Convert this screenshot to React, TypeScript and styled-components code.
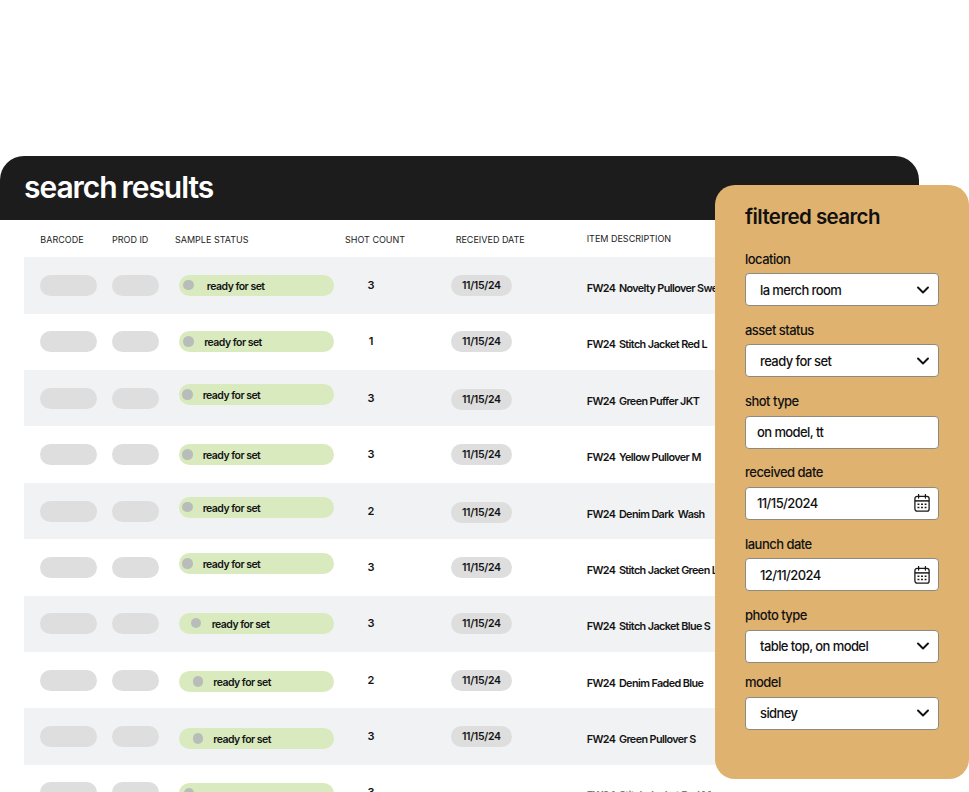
import styled, { createGlobalStyle } from 'styled-components';
import { ChevronDown } from 'lucide-react';

interface Sample {
	count: number;
	item: string;
	statusTop: number;
	dotLeft: number;
	textGap: number;
	dateTop: number;
	cutOff?: boolean;
}

const samples: Sample[] = [
	{ count: 3, item: 'Novelty Pullover Sweater', statusTop: 17.7, dotLeft: 4.7, textGap: 13, dateTop: 17.7 },
	{ count: 1, item: 'Stitch Jacket Red L', statusTop: 17.6, dotLeft: 4.7, textGap: 10.3, dateTop: 17.6 },
	{ count: 3, item: 'Green Puffer JKT', statusTop: 14, dotLeft: 3.7, textGap: 9.8, dateTop: 19 },
	{ count: 3, item: 'Yellow Pullover M', statusTop: 17.8, dotLeft: 3.7, textGap: 9.8, dateTop: 17.8 },
	{ count: 2, item: 'Denim Dark  Wash', statusTop: 14, dotLeft: 3.7, textGap: 9.8, dateTop: 19 },
	{ count: 3, item: 'Stitch Jacket Green L', statusTop: 14, dotLeft: 3.7, textGap: 9.8, dateTop: 18 },
	{ count: 3, item: 'Stitch Jacket Blue S', statusTop: 17, dotLeft: 12, textGap: 10.5, dateTop: 17.6 },
	{ count: 2, item: 'Denim Faded Blue', statusTop: 19, dotLeft: 14, textGap: 10.1, dateTop: 17.9 },
	{ count: 3, item: 'Green Pullover S', statusTop: 19.8, dotLeft: 14, textGap: 10.1, dateTop: 17.6 },
	{ count: 3, item: 'Stitch Jacket Red M', statusTop: 17.8, dotLeft: 5.3, textGap: 10, dateTop: 17.8, cutOff: true },
];

const CalendarIcon = () => (
	<CalendarSvg width="16" height="18" viewBox="0 0 16 18" fill="none" stroke="#1a1a1a" strokeWidth="1.3">
		<rect x="0.9" y="2.4" width="14.2" height="14.7" rx="2.2" />
		<path d="M0.9 6.9h14.2" strokeWidth="1.5" />
		<path d="M4.6 0.6v3.4M11.4 0.6v3.4" strokeLinecap="round" />
		<path d="M3.5 10.2h1.9M7.05 10.2h1.9M10.6 10.2h1.9M3.5 13.4h1.9M7.05 13.4h1.9M10.6 13.4h1.9" strokeWidth="1.5" />
	</CalendarSvg>
);

const Chevron = () => <ChevronDown size={20} strokeWidth={2.3} color="#111" />;

export default function App() {
	return (
		<>
			<GlobalStyle />
			<Stage>
				<Results>
					<TitleBar>
						<Title>search results</Title>
					</TitleBar>
					<ColumnRow>
						<ColumnName>BARCODE</ColumnName>
						<ColumnName>PROD ID</ColumnName>
						<ColumnName $shift={-3.7}>SAMPLE STATUS</ColumnName>
						<ColumnName>SHOT COUNT</ColumnName>
						<ColumnName $shift={4.7}>RECEIVED DATE</ColumnName>
						<ColumnName $raise>ITEM DESCRIPTION</ColumnName>
					</ColumnRow>
					{samples.map((sample, index) => (
						<Row key={index} $shaded={index % 2 === 0}>
							<Placeholder $width={56.4} />
							<Placeholder $width={46.7} />
							<StatusPill $top={sample.statusTop}>
								<StatusDot $left={sample.dotLeft} />
								{!sample.cutOff && <StatusText $gap={sample.textGap}>ready for set</StatusText>}
							</StatusPill>
							<Count>{sample.count}</Count>
							{sample.cutOff ? <span /> : <DatePill $top={sample.dateTop}>11/15/24</DatePill>}
							<Description $faded={sample.cutOff}>
								<Season>FW24</Season>
								{sample.item}
							</Description>
						</Row>
					))}
				</Results>

				<FilterPanel>
					<PanelTitle>filtered search</PanelTitle>
					<Field>
						<FieldLabel>location</FieldLabel>
						<FieldBox>
							la merch room
							<Chevron />
						</FieldBox>
					</Field>
					<Field>
						<FieldLabel>asset status</FieldLabel>
						<FieldBox>
							ready for set
							<Chevron />
						</FieldBox>
					</Field>
					<Field>
						<FieldLabel>shot type</FieldLabel>
						<FieldBox $inset={11}>on model, tt</FieldBox>
					</Field>
					<Field>
						<FieldLabel>received date</FieldLabel>
						<FieldBox $inset={11}>
							11/15/2024
							<CalendarIcon />
						</FieldBox>
					</Field>
					<Field>
						<FieldLabel>launch date</FieldLabel>
						<FieldBox>
							12/11/2024
							<CalendarIcon />
						</FieldBox>
					</Field>
					<Field>
						<FieldLabel>photo type</FieldLabel>
						<FieldBox>
							table top, on model
							<Chevron />
						</FieldBox>
					</Field>
					<Field $tight>
						<FieldLabel>model</FieldLabel>
						<FieldBox>
							sidney
							<Chevron />
						</FieldBox>
					</Field>
				</FilterPanel>
			</Stage>
		</>
	);
}

const GlobalStyle = createGlobalStyle`
	html, body {
		margin: 0;
		background: #fff;
	}
	* {
		box-sizing: border-box;
	}
`;

const Stage = styled.main`
	position: relative;
	width: 969px;
	height: 792px;
	padding-top: 156px;
	overflow: hidden;
	background: #fff;
	font-family: Inter, 'Liberation Sans', sans-serif;
	color: #141414;
`;

const Results = styled.section`
	width: 919px;
`;

const TitleBar = styled.header`
	display: flex;
	align-items: center;
	height: 63.6px;
	padding: 0 0 2px 24px;
	background: #1c1c1c;
	border-radius: 24px 24px 0 0;
`;

const Title = styled.h1`
	margin: 0;
	font-size: 30px;
	font-weight: 600;
	letter-spacing: -0.035em;
	word-spacing: -1.5px;
	color: #fff;
`;

const tableColumns = '71.7px 66.7px 166.3px 106px 135.7px 1fr';

const ColumnRow = styled.div`
	display: grid;
	grid-template-columns: ${tableColumns};
	align-items: center;
	height: 37.7px;
	padding: 4px 0 0 40.3px;
`;

const ColumnName = styled.span<{ $shift?: number; $raise?: boolean }>`
	margin-left: ${({ $shift }) => $shift ?? 0}px;
	margin-top: ${({ $raise }) => ($raise ? -2 : 0)}px;
	font-size: 9px;
	line-height: 12px;
	white-space: nowrap;
	color: #222;
`;

const Row = styled.div<{ $shaded: boolean }>`
	display: grid;
	grid-template-columns: ${tableColumns};
	align-items: start;
	height: 56.4px;
	margin-left: 24px;
	padding-left: 16.3px;
	background: ${({ $shaded }) => ($shaded ? '#f1f2f3' : '#fff')};
`;

const Placeholder = styled.div<{ $width: number }>`
	width: ${({ $width }) => $width}px;
	height: 21px;
	margin-top: 17.7px;
	border-radius: 11px;
	background: #dedede;
`;

const StatusPill = styled.div<{ $top: number }>`
	display: flex;
	align-items: flex-start;
	width: 155.6px;
	height: 21px;
	margin-top: ${({ $top }) => $top}px;
	border-radius: 11px;
	background: #d9eabf;
`;

const StatusDot = styled.span<{ $left: number }>`
	flex: none;
	width: 10.5px;
	height: 10.5px;
	margin: 5px 0 0 ${({ $left }) => $left}px;
	border-radius: 50%;
	background: #b9bdb9;
`;

const StatusText = styled.span<{ $gap: number }>`
	margin-left: ${({ $gap }) => $gap}px;
	font-size: 10.5px;
	font-weight: 600;
	line-height: 24px;
	letter-spacing: -0.05em;
	white-space: nowrap;
`;

const Count = styled.span`
	width: 52px;
	margin-top: 20.7px;
	font-size: 11px;
	font-weight: 600;
	line-height: 14px;
	text-align: center;
`;

const DatePill = styled.div<{ $top: number }>`
	width: 60.7px;
	height: 21px;
	margin-top: ${({ $top }) => $top}px;
	border-radius: 11px;
	background: #dedede;
	font-size: 10.5px;
	font-weight: 600;
	line-height: 22px;
	letter-spacing: -0.03em;
	text-align: center;
`;

const Description = styled.span<{ $faded?: boolean }>`
	margin-top: 24.7px;
	font-size: 10.8px;
	font-weight: 600;
	line-height: 14px;
	letter-spacing: -0.055em;
	white-space: pre;
	color: ${({ $faded }) => ($faded ? '#777' : 'inherit')};
`;

const Season = styled.span`
	margin-right: 3.5px;
`;

const FilterPanel = styled.aside`
	position: absolute;
	top: 185px;
	left: 715px;
	width: 253.5px;
	height: 593.5px;
	padding: 20px 30px;
	border-radius: 20px;
	background: #dfb26f;
	color: #111;
`;

const PanelTitle = styled.h2`
	margin: 0 0 21.5px;
	font-size: 20.5px;
	font-weight: 600;
	line-height: 24px;
	letter-spacing: -0.028em;
`;

const Field = styled.div<{ $tight?: boolean }>`
	display: flex;
	flex-direction: column;
	gap: 6.6px;
	margin-top: ${({ $tight }) => ($tight ? 11.7 : 15.7)}px;
	&:nth-child(2) {
		margin-top: 0;
	}
`;

const FieldLabel = styled.label`
	font-size: 13px;
	font-weight: 500;
	line-height: 16px;
	letter-spacing: -0.04em;
`;

const FieldBox = styled.div<{ $inset?: number }>`
	display: flex;
	align-items: center;
	justify-content: space-between;
	width: 193.5px;
	height: 33px;
	padding: 0 5px 0 ${({ $inset }) => $inset ?? 14}px;
	border: 1px solid #8d8a80;
	border-radius: 4px;
	background: #fff;
	font-size: 13px;
	font-weight: 500;
	letter-spacing: -0.045em;
	white-space: nowrap;
`;

const CalendarSvg = styled.svg`
	margin-right: 3px;
`;
